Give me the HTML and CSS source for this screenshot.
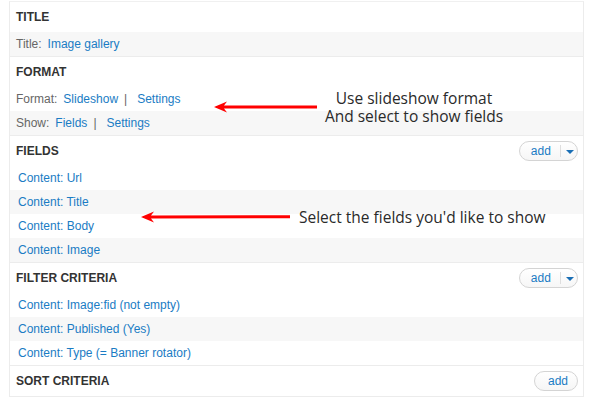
FILE: index.html
```html
<!DOCTYPE html>
<html>
<head>
<meta charset="utf-8">
<link rel="stylesheet" href="styles.css">
</head>
<body>
<div class="panel">
  <section class="sec">
    <div class="head"><span>TITLE</span></div>
    <div class="row alt"><span class="lbl">Title:</span><a>Image gallery</a></div>
  </section>
  <section class="sec">
    <div class="head"><span>FORMAT</span></div>
    <div class="row"><span class="lbl">Format:</span><a>Slideshow</a><span class="sep">|</span><a>Settings</a></div>
    <div class="row alt"><span class="lbl">Show:</span><a>Fields</a><span class="sep">|</span><a>Settings</a></div>
  </section>
  <section class="sec">
    <div class="head"><span>FIELDS</span>
      <div class="btn"><span class="add">add</span><span class="caret"></span></div>
    </div>
    <div class="row ind"><a>Content: Url</a></div>
    <div class="row ind alt"><a>Content: Title</a></div>
    <div class="row ind"><a>Content: Body</a></div>
    <div class="row ind alt"><a>Content: Image</a></div>
  </section>
  <section class="sec">
    <div class="head"><span>FILTER CRITERIA</span>
      <div class="btn"><span class="add">add</span><span class="caret"></span></div>
    </div>
    <div class="row ind"><a>Content: Image:fid (not empty)</a></div>
    <div class="row ind alt"><a>Content: Published (Yes)</a></div>
    <div class="row ind"><a>Content: Type (= Banner rotator)</a></div>
  </section>
  <section class="sec last">
    <div class="head"><span>SORT CRITERIA</span>
      <div class="btn single"><span class="add">add</span></div>
    </div>
  </section>

  <svg class="arrow a1" width="103" height="12" viewBox="0 0 103 12">
    <path d="M0 6 L13 0.5 L10 4.6 L103 4.4 L103 7.4 L10 7.4 L13 11.5 Z" fill="#f00"/>
  </svg>
  <svg class="arrow a2" width="149" height="12" viewBox="0 0 149 12">
    <path d="M0 6 L13 0.5 L10 4.6 L149 4.2 L149 7.2 L10 7.4 L13 11.5 Z" fill="#f00"/>
  </svg>
  <div class="note n1">Use slideshow format<br>And select to show fields</div>
  <div class="note n2">Select the fields you'd like to show</div>
</div>
</body>
</html>
```

FILE: styles.css
```css
html, body {
  margin: 0;
  padding: 0;
  background: #fff;
}
body {
  font-family: "Liberation Sans", Arial, sans-serif;
  font-size: 12px;
  color: #333;
}
.panel {
  position: relative;
  margin: 1px 0 0 9px;
  width: 575px;
  border: 1px solid #ececec;
  border-top: 1px solid #f0f0f0;
  box-sizing: border-box;
}
.sec {
  border-bottom: 1px solid #ececec;
}
.sec.last {
  border-bottom: none;
}
.head {
  height: 30px;
  display: flex;
  align-items: center;
  justify-content: space-between;
  padding: 0 5px 0 6px;
  font-weight: bold;
  color: #333;
}
.row {
  height: 24px;
  display: flex;
  align-items: center;
  padding-left: 6px;
  white-space: nowrap;
  color: #666;
}
.row.ind {
  padding-left: 8px;
}
.row.alt {
  background: #f7f7f7;
}
.lbl {
  margin-right: 6px;
}
a {
  color: #1a7cc4;
  text-decoration: none;
}
.sep {
  color: #666;
  margin: 0 10px 0 6px;
}
.btn {
  display: flex;
  align-items: center;
  height: 18px;
  width: 57px;
  border: 1px solid #d4d4d4;
  border-radius: 10px;
  background: linear-gradient(#fff, #f6f6f6);
  font-weight: normal;
}
.btn.single {
  width: 42px;
  justify-content: center;
}
.add {
  color: #1a7cc4;
  font-size: 12px;
  width: 39px;
  text-align: center;
  padding-left: 2px;
}
.btn.single .add {
  width: auto;
  padding-left: 4px;
}
.caret {
  height: 12px;
  border-left: 1px solid #dedede;
  width: 17px;
  position: relative;
}
.caret::after {
  content: "";
  position: absolute;
  left: 5px;
  top: 5px;
  border-left: 4px solid transparent;
  border-right: 4px solid transparent;
  border-top: 4px solid #1a6fb5;
}
.arrow {
  position: absolute;
}
.a1 {
  left: 204px;
  top: 99px;
}
.a2 {
  left: 131px;
  top: 209px;
}
.note {
  position: absolute;
  font-family: "Open Sans", "Noto Sans", sans-serif;
  font-size: 15.5px;
  color: #2a2a2a;
  text-align: center;
  line-height: 18px;
  white-space: nowrap;
}
.n1 {
  left: 284px;
  top: 87px;
  width: 240px;
}
.n2 {
  left: 289px;
  top: 206px;
}
```
